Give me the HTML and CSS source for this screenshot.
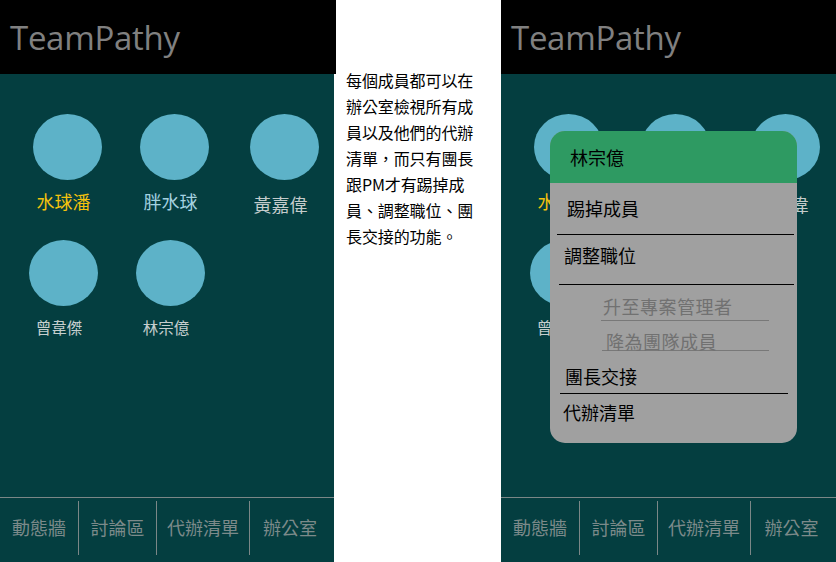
FILE: index.html
```html
<!DOCTYPE html>
<html lang="zh-Hant">
<head>
<meta charset="utf-8">
<title>TeamPathy</title>
<link rel="stylesheet" href="styles.css">
</head>
<body>
<div class="page">
  <section class="phone phone-left">
    <header class="app-header app-header-wide"><h1 class="brand">TeamPathy</h1></header>
    <main class="app-main">
      <div class="members">
        <div class="member-row row-one">
          <div class="member"><div class="avatar"></div><div class="name name-lead">水球潘</div></div>
          <div class="member"><div class="avatar"></div><div class="name name-pm">胖水球</div></div>
          <div class="member"><div class="avatar"></div><div class="name name-plain name-low">黃嘉偉</div></div>
        </div>
        <div class="member-row row-two">
          <div class="member"><div class="avatar"></div><div class="name name-small">曾韋傑</div></div>
          <div class="member"><div class="avatar"></div><div class="name name-small">林宗億</div></div>
        </div>
      </div>
    </main>
    <nav class="tabbar">
      <div class="tab">動態牆</div>
      <div class="tab">討論區</div>
      <div class="tab">代辦清單</div>
      <div class="tab">辦公室</div>
    </nav>
  </section>

  <aside class="note">
    <p class="note-text">每個成員都可以在辦公室檢視所有成員以及他們的代辦清單，而只有團長跟PM才有踢掉成員、調整職位、團長交接的功能。</p>
  </aside>

  <section class="phone phone-right">
    <header class="app-header"><h1 class="brand">TeamPathy</h1></header>
    <main class="app-main">
      <div class="members">
        <div class="member-row row-one">
          <div class="member"><div class="avatar"></div><div class="name name-lead">水球潘</div></div>
          <div class="member"><div class="avatar"></div><div class="name name-pm">胖水球</div></div>
          <div class="member"><div class="avatar"></div><div class="name name-plain name-low">黃嘉偉</div></div>
        </div>
        <div class="member-row row-two">
          <div class="member"><div class="avatar"></div><div class="name name-small">曾韋傑</div></div>
          <div class="member"><div class="avatar"></div><div class="name name-small">林宗億</div></div>
        </div>
      </div>
    </main>
    <nav class="tabbar">
      <div class="tab">動態牆</div>
      <div class="tab">討論區</div>
      <div class="tab">代辦清單</div>
      <div class="tab">辦公室</div>
    </nav>

    <div class="menu">
      <div class="menu-head">林宗億</div>
      <div class="menu-item item-kick">踢掉成員</div>
      <div class="menu-item item-role">調整職位</div>
      <div class="menu-sub sub-up">升至專案管理者</div>
      <div class="menu-sub sub-down">降為團隊成員</div>
      <div class="menu-item item-hand">團長交接</div>
      <div class="menu-item item-todo">代辦清單</div>
    </div>
  </section>
</div>
</body>
</html>
```

FILE: styles.css
```css
* { box-sizing: border-box; }
html, body { margin: 0; padding: 0; }
body {
  background: #ffffff;
  width: 836px;
  height: 562px;
  overflow: hidden;
  font-family: "Noto Sans CJK TC", "Noto Sans", sans-serif;
  font-weight: 400;
}
.page {
  display: flex;
  width: 836px;
  height: 562px;
}
.phone {
  position: relative;
  display: flex;
  flex-direction: column;
  height: 562px;
  background: #043e40;
}
.phone-left { width: 334px; }
.phone-right { width: 335px; }

.app-header {
  height: 74px;
  background: #000;
  display: flex;
  align-items: center;
  padding-left: 10px;
}
.app-header-wide { margin-right: -2px; }
.brand {
  margin: 0;
  font-family: "Open Sans", "Noto Sans", sans-serif;
  font-weight: 500;
  font-size: 33px;
  line-height: 1;
  color: #808080;
  letter-spacing: -0.3px;
}

.app-main {
  flex: 1;
  padding-top: 40px;
}
.members {
  display: flex;
  flex-direction: column;
}
.member-row { display: flex; }
.row-one { padding-left: 33px; gap: 38px; }
.row-one .member:nth-child(3) { margin-left: 3px; }
.row-two { padding-left: 29px; gap: 38px; margin-top: 25px; }
.member {
  width: 69px;
  display: flex;
  flex-direction: column;
  align-items: center;
}
.avatar {
  width: 69px;
  height: 66px;
  border-radius: 50%;
  background: #5db2c8;
}
.name {
  margin-top: 10px;
  margin-right: 8px;
  font-size: 18px;
  line-height: 22px;
  white-space: nowrap;
}
.name-lead { color: #f4c20d; }
.name-pm { color: #a4d2e0; }
.name-plain { color: #c3cbcb; }
.name-low { margin-top: 13px; }
.name-small {
  font-size: 15.5px;
  line-height: 20px;
  margin-top: 11px;
  margin-right: 9px;
  color: #c6cece;
}

.tabbar {
  height: 65px;
  border-top: 1px solid #7b8787;
  padding-top: 3px;
  display: grid;
  grid-template-columns: 78px 78px 93px 1fr;
  align-items: start;
}
.tab {
  height: 54px;
  display: flex;
  align-items: center;
  justify-content: center;
  padding-bottom: 3px;
  font-size: 18px;
  color: #7c8a8a;
  white-space: nowrap;
}
.tab + .tab { border-left: 1px solid #7b8787; }
.tab:nth-child(4) { padding-right: 4px; }

.note {
  width: 167px;
  padding: 67px 0 0 12px;
}
.note-text {
  margin: 0;
  width: 130px;
  font-size: 16px;
  line-height: 26px;
  color: #000;
  letter-spacing: -0.1px;
}

.menu {
  position: absolute;
  left: 49px;
  top: 131px;
  width: 247px;
  height: 312px;
  border-radius: 15px;
  background: #a0a0a0;
  overflow: hidden;
  display: flex;
  flex-direction: column;
}
.menu-head {
  height: 52px;
  background: #2e9a62;
  display: flex;
  align-items: center;
  padding-left: 20px;
  font-size: 18px;
  color: #000;
}
.menu-item {
  font-size: 18px;
  line-height: 22px;
  color: #000;
}
.item-kick {
  height: 52px;
  margin: 0 3px 0 7px;
  padding: 14px 0 0 10px;
  border-bottom: 1px solid #000;
}
.item-role {
  height: 50px;
  margin: 0 3px 0 9px;
  padding: 9px 0 0 5px;
  border-bottom: 1px solid #000;
}
.menu-sub {
  font-size: 18px;
  line-height: 18px;
  letter-spacing: 0.5px;
  color: #717171;
  border-bottom: 1px solid #787878;
}
.sub-up {
  margin: 12px 0 0 51px;
  width: 168px;
  padding: 0 0 5px 2px;
}
.sub-down {
  margin: 11px 0 0 52px;
  width: 167px;
  padding: 0 0 0 4px;
}
.item-hand {
  margin: 14px 9px 0 10px;
  padding: 0 0 6px 5px;
  border-bottom: 1px solid #000;
}
.item-todo {
  margin: 7px 0 0 13px;
}
```
